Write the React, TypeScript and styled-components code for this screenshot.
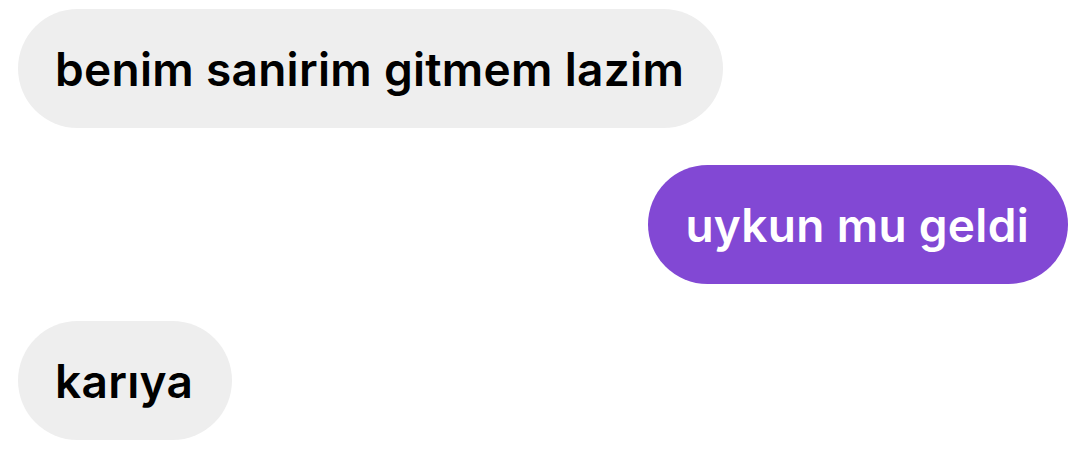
import React from "react";
import styled, { createGlobalStyle } from "styled-components";

const Global = createGlobalStyle`
  html, body { margin: 0; padding: 0; background: #ffffff; }
  body { font-family: Inter, "Noto Sans", "Liberation Sans", sans-serif; }
`;

const Thread = styled.div`
  display: flex;
  flex-direction: column;
  gap: 37px;
  padding: 9px 23px 0 18px;
  width: 1091px;
  height: 466px;
  box-sizing: border-box;
`;

const Row = styled.div<{ $mine?: boolean }>`
  display: flex;
  justify-content: ${(p) => (p.$mine ? "flex-end" : "flex-start")};
`;

const Bubble = styled.div<{ $mine?: boolean }>`
  display: flex;
  align-items: center;
  height: 119px;
  box-sizing: border-box;
  padding: 0 39px 0 37px;
  border-radius: 60px;
  background: ${(p) => (p.$mine ? "#8248d4" : "#eeeeee")};
  color: ${(p) => (p.$mine ? "#ffffff" : "#000000")};
  font-size: 46px;
  font-weight: 600;
  letter-spacing: 0.3px;
  white-space: nowrap;
`;

export default function App() {
  return (
    <>
      <Global />
      <Thread>
        <Row>
          <Bubble>benim sanirim gitmem lazim</Bubble>
        </Row>
        <Row $mine>
          <Bubble $mine>uykun mu geldi</Bubble>
        </Row>
        <Row>
          <Bubble>karıya</Bubble>
        </Row>
      </Thread>
    </>
  );
}
